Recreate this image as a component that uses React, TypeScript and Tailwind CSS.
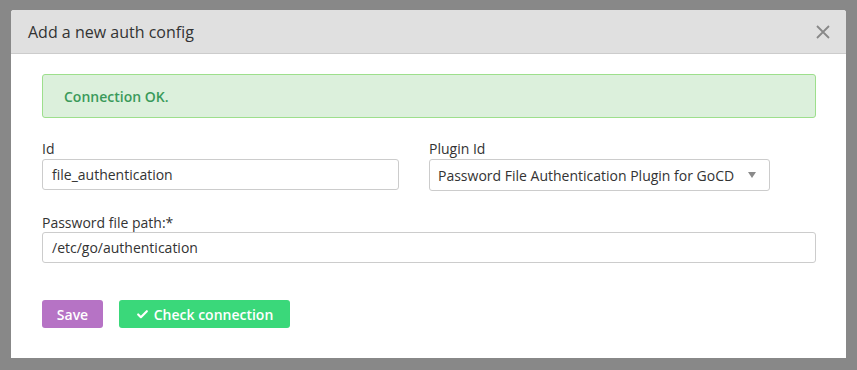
import { Check } from 'lucide-react';

const font = { fontFamily: '"Open Sans", "Noto Sans", sans-serif' };

export default function App() {
  return (
    <div className="w-[857px] h-[370px] bg-[#888888] pt-[10px] pl-[11px]" style={font}>
      <div className="w-[835px] h-[348px] bg-white rounded-t-[3px] flex flex-col">
        {/* Header */}
        <div className="h-[44px] bg-[#e0e0e0] border-b border-[#cccccc] rounded-t-[3px] flex items-center justify-between pl-[17px] pr-[16px]">
          <h2 className="text-[16px] text-[#333333] leading-none">Add a new auth config</h2>
          <svg width="14" height="14" viewBox="0 0 14 14" className="text-[#888888]">
            <path d="M1 1 L13 13 M13 1 L1 13" stroke="currentColor" strokeWidth="1.8" fill="none" />
          </svg>
        </div>

        {/* Body */}
        <div className="pl-[31px] pr-[30px] pt-[20px]">
          <div className="h-[44px] rounded-[3px] border border-[#9ddf8c] bg-[#dcf0dc] flex items-center pl-[21px]">
            <span className="text-[14px] font-semibold text-[#3a9a5a]">Connection OK.</span>
          </div>

          <div className="flex gap-[30px] mt-[21px]">
            <div className="w-[357px]">
              <label className="block text-[14px] text-[#333333] leading-[20px]">Id</label>
              <div className="h-[31px] border border-[#cccccc] rounded-[3px] flex items-center px-[9px] text-[14px] text-[#333333]">
                file_authentication
              </div>
            </div>
            <div className="w-[341px]">
              <label className="block text-[14px] text-[#333333] leading-[20px]">Plugin Id</label>
              <div className="h-[32px] border border-[#cccccc] rounded-[3px] flex items-center justify-between pl-[8px] pr-[13px] text-[14px] text-[#333333]">
                <span>Password File Authentication Plugin for GoCD</span>
                <svg width="8" height="6" viewBox="0 0 8 6">
                  <path d="M0 0 L8 0 L4 6 Z" fill="#8a8a8a" />
                </svg>
              </div>
            </div>
          </div>

          <label className="block mt-[22px] text-[14px] text-[#333333] leading-[19px]">Password file path:*</label>
          <div className="h-[31px] border border-[#cccccc] rounded-[3px] flex items-center px-[9px] text-[14px] text-[#333333]">
            /etc/go/authentication
          </div>

          <div className="flex gap-[16px] mt-[37px]">
            <button className="h-[28px] w-[61px] rounded-[3px] bg-[#b673c5] text-white text-[14px] font-semibold">
              Save
            </button>
            <button className="h-[28px] w-[171px] rounded-[3px] bg-[#3ad87a] text-white text-[14px] font-semibold flex items-center justify-center gap-[5px]">
              <Check size={13} strokeWidth={4} />
              Check connection
            </button>
          </div>
        </div>
      </div>
    </div>
  );
}
